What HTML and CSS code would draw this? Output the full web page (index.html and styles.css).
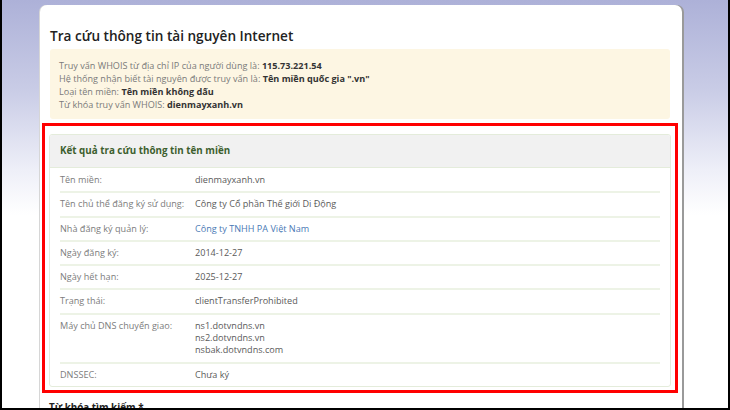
FILE: index.html
```html
<!DOCTYPE html>
<html lang="vi">
<head>
<meta charset="utf-8">
<link rel="stylesheet" href="styles.css">
</head>
<body>
<div class="frame">
  <div class="card">
    <h1 class="title">Tra cứu thông tin tài nguyên Internet</h1>
    <div class="notice">
      <div>Truy vấn WHOIS từ địa chỉ IP của người dùng là: <b>115.73.221.54</b></div>
      <div>Hệ thống nhận biết tài nguyên được truy vấn là: <b>Tên miền quốc gia ".vn"</b></div>
      <div>Loại tên miền: <b>Tên miền không dấu</b></div>
      <div>Từ khóa truy vấn WHOIS: <b>dienmayxanh.vn</b></div>
    </div>
    <div class="highlight">
      <div class="panel">
        <div class="panel-head">Kết quả tra cứu thông tin tên miền</div>
        <div class="rows">
          <div class="row"><div class="label">Tên miền:</div><div class="value">dienmayxanh.vn</div></div>
          <div class="row"><div class="label">Tên chủ thể đăng ký sử dụng:</div><div class="value">Công ty Cổ phần Thế giới Di Động</div></div>
          <div class="row"><div class="label">Nhà đăng ký quản lý:</div><div class="value link">Công ty TNHH PA Việt Nam</div></div>
          <div class="row"><div class="label">Ngày đăng ký:</div><div class="value">2014-12-27</div></div>
          <div class="row"><div class="label">Ngày hết hạn:</div><div class="value">2025-12-27</div></div>
          <div class="row"><div class="label">Trạng thái:</div><div class="value">clientTransferProhibited</div></div>
          <div class="row"><div class="label">Máy chủ DNS chuyển giao:</div><div class="value">ns1.dotvndns.vn<br>ns2.dotvndns.vn<br>nsbak.dotvndns.com</div></div>
          <div class="row"><div class="label">DNSSEC:</div><div class="value">Chưa ký</div></div>
        </div>
      </div>
    </div>
    <div class="field-label">Từ khóa tìm kiếm *</div>
  </div>
</div>
</body>
</html>
```

FILE: styles.css
```css
html, body {
  margin: 0;
  padding: 0;
}
body {
  width: 730px;
  height: 410px;
  overflow: hidden;
  font-family: "Open Sans", "Noto Sans", sans-serif;
}
.frame {
  box-sizing: border-box;
  width: 730px;
  height: 410px;
  border-left: 2px solid #000;
  border-right: 2px solid #000;
  border-bottom: 2px solid #000;
  background: linear-gradient(#adb1d8 0px, #c9cce6 90px, #eeeff8 170px, #ffffff 215px);
  padding: 5px 0 0 38px;
  overflow: hidden;
}
.card {
  box-sizing: border-box;
  width: 642px;
  height: 420px;
  background: #fff;
  border-radius: 7px 7px 0 0;
  box-shadow: 2px 0 0 #9a9a9a, -1px 0 0 #d6d6d6;
  padding: 21px 12px 0 10px;
}
.title {
  margin: 0 0 3px;
  font-size: 13.6px;
  line-height: 20px;
  font-weight: 600;
  color: #222;
}
.notice {
  background: #fdf6e3;
  border-radius: 3px;
  padding: 10px 9px 8px;
  font-size: 9.1px;
  line-height: 13px;
  color: #7a7a7a;
}
.notice b {
  color: #333;
  font-weight: 700;
}
.highlight {
  margin: 4px -8px 0;
  border: 3px solid #ff0000;
  padding: 8px 4px 3px 4px;
}
.panel {
  border: 1px solid #e4ecdb;
  border-radius: 3px;
  overflow: hidden;
}
.panel-head {
  background: #f1f1f1;
  border-bottom: 1px solid #e4ecdb;
  height: 32px;
  line-height: 32px;
  padding-left: 10px;
  font-size: 9.8px;
  font-weight: 700;
  color: #3d5f2e;
}
.rows {
  padding: 0 10px;
}
.row {
  display: flex;
  border-top: 2px solid #edf3e6;
  padding: 5px 0 5px;
  font-size: 9.1px;
  line-height: 12.3px;
}
.row:first-child {
  border-top: none;
  padding-top: 6px;
}
.label {
  width: 135px;
  flex: none;
  color: #7c7c7c;
}
.value {
  color: #5a5a5a;
}
.value.link {
  color: #4a79b5;
}
.field-label {
  margin: 8px 0 0 -1px;
  font-size: 9.8px;
  font-weight: 700;
  color: #222;
}
```
